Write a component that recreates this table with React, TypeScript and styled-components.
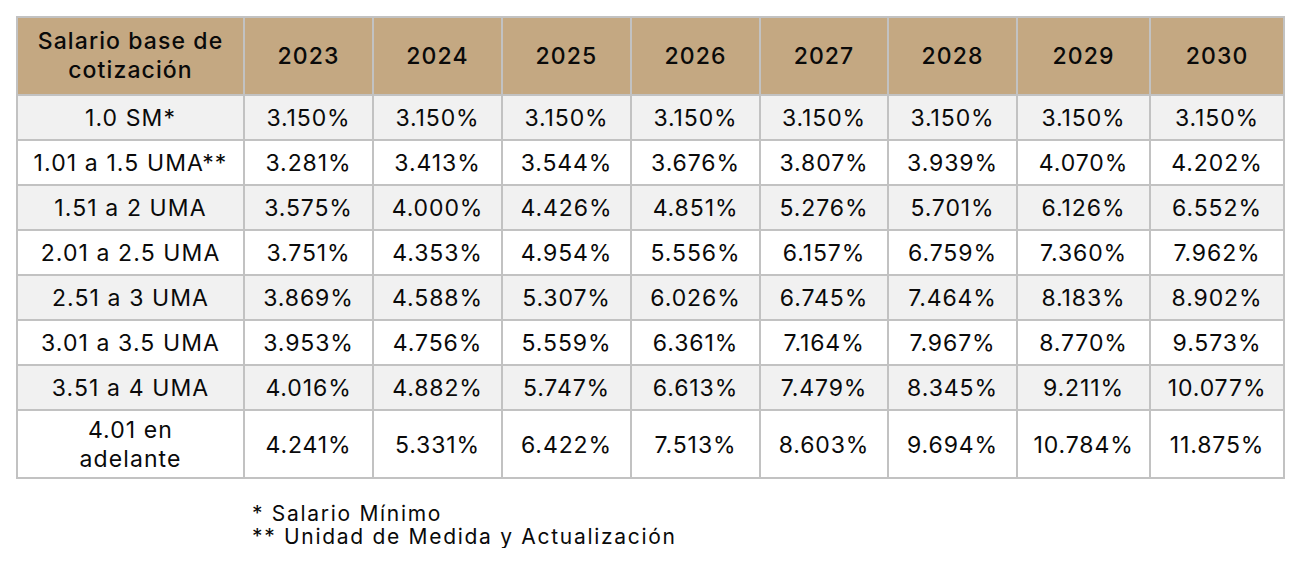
import styled, { createGlobalStyle } from 'styled-components';

const GlobalStyle = createGlobalStyle`
  body {
    margin: 0;
    background: #ffffff;
    font-family: Inter, "Noto Sans", sans-serif;
    color: #0a0a0a;
  }
`;

const Page = styled.div`
  padding: 16px 0 0 16px;
`;

const Table = styled.table`
  border-collapse: collapse;
  table-layout: fixed;
  width: 1268px;
  border: 2px solid #c2c2c2;
`;

const HeadCell = styled.th`
  background: #c4a882;
  border: 2px solid #c2c2c2;
  height: 76px;
  padding: 0 4px;
  font-size: 23px;
  font-weight: 500;
  letter-spacing: 1.1px;
  line-height: 29px;
  text-align: center;
`;

const Row = styled.tr<{ $shaded: boolean }>`
  background: ${(p) => (p.$shaded ? '#f1f1f1' : '#ffffff')};
`;

const Cell = styled.td<{ $tall?: boolean }>`
  border: 2px solid #c2c2c2;
  height: ${(p) => (p.$tall ? '64px' : '41px')};
  padding: 2px 2px 0;
  font-size: 23px;
  font-weight: 400;
  letter-spacing: 0.9px;
  line-height: 29px;
  text-align: center;
  white-space: nowrap;
`;

const LabelCell = styled(Cell)`
  white-space: normal;
  letter-spacing: 1.1px;
`;

const Notes = styled.div`
  padding: 23px 0 0 236px;
  font-size: 21px;
  letter-spacing: 1.7px;
  line-height: 23px;
`;

const years = ['2023', '2024', '2025', '2026', '2027', '2028', '2029', '2030'];
const widths = [227, 129, 129, 129, 129, 128, 129, 133, 134];

const rows: { label: string; values: string[] }[] = [
  { label: '1.0 SM*', values: ['3.150%', '3.150%', '3.150%', '3.150%', '3.150%', '3.150%', '3.150%', '3.150%'] },
  { label: '1.01 a 1.5 UMA**', values: ['3.281%', '3.413%', '3.544%', '3.676%', '3.807%', '3.939%', '4.070%', '4.202%'] },
  { label: '1.51 a 2 UMA', values: ['3.575%', '4.000%', '4.426%', '4.851%', '5.276%', '5.701%', '6.126%', '6.552%'] },
  { label: '2.01 a 2.5 UMA', values: ['3.751%', '4.353%', '4.954%', '5.556%', '6.157%', '6.759%', '7.360%', '7.962%'] },
  { label: '2.51 a 3 UMA', values: ['3.869%', '4.588%', '5.307%', '6.026%', '6.745%', '7.464%', '8.183%', '8.902%'] },
  { label: '3.01 a 3.5 UMA', values: ['3.953%', '4.756%', '5.559%', '6.361%', '7.164%', '7.967%', '8.770%', '9.573%'] },
  { label: '3.51 a 4 UMA', values: ['4.016%', '4.882%', '5.747%', '6.613%', '7.479%', '8.345%', '9.211%', '10.077%'] },
  { label: '4.01 en adelante', values: ['4.241%', '5.331%', '6.422%', '7.513%', '8.603%', '9.694%', '10.784%', '11.875%'] },
];

function App() {
  return (
    <>
      <GlobalStyle />
      <Page>
        <Table>
          <colgroup>
            {widths.map((w, i) => (
              <col key={i} style={{ width: w }} />
            ))}
          </colgroup>
          <thead>
            <tr>
              <HeadCell>Salario base de cotización</HeadCell>
              {years.map((y) => (
                <HeadCell key={y}>{y}</HeadCell>
              ))}
            </tr>
          </thead>
          <tbody>
            {rows.map((r, i) => {
              const tall = i === rows.length - 1;
              return (
                <Row key={r.label} $shaded={i % 2 === 0}>
                  <LabelCell $tall={tall}>
                    {tall ? (
                      <>
                        4.01 en
                        <br />
                        adelante
                      </>
                    ) : (
                      r.label
                    )}
                  </LabelCell>
                  {r.values.map((v, j) => (
                    <Cell key={j} $tall={tall}>
                      {v}
                    </Cell>
                  ))}
                </Row>
              );
            })}
          </tbody>
        </Table>
        <Notes>
          * Salario Mínimo
          <br />
          ** Unidad de Medida y Actualización
        </Notes>
      </Page>
    </>
  );
}

export default App;
